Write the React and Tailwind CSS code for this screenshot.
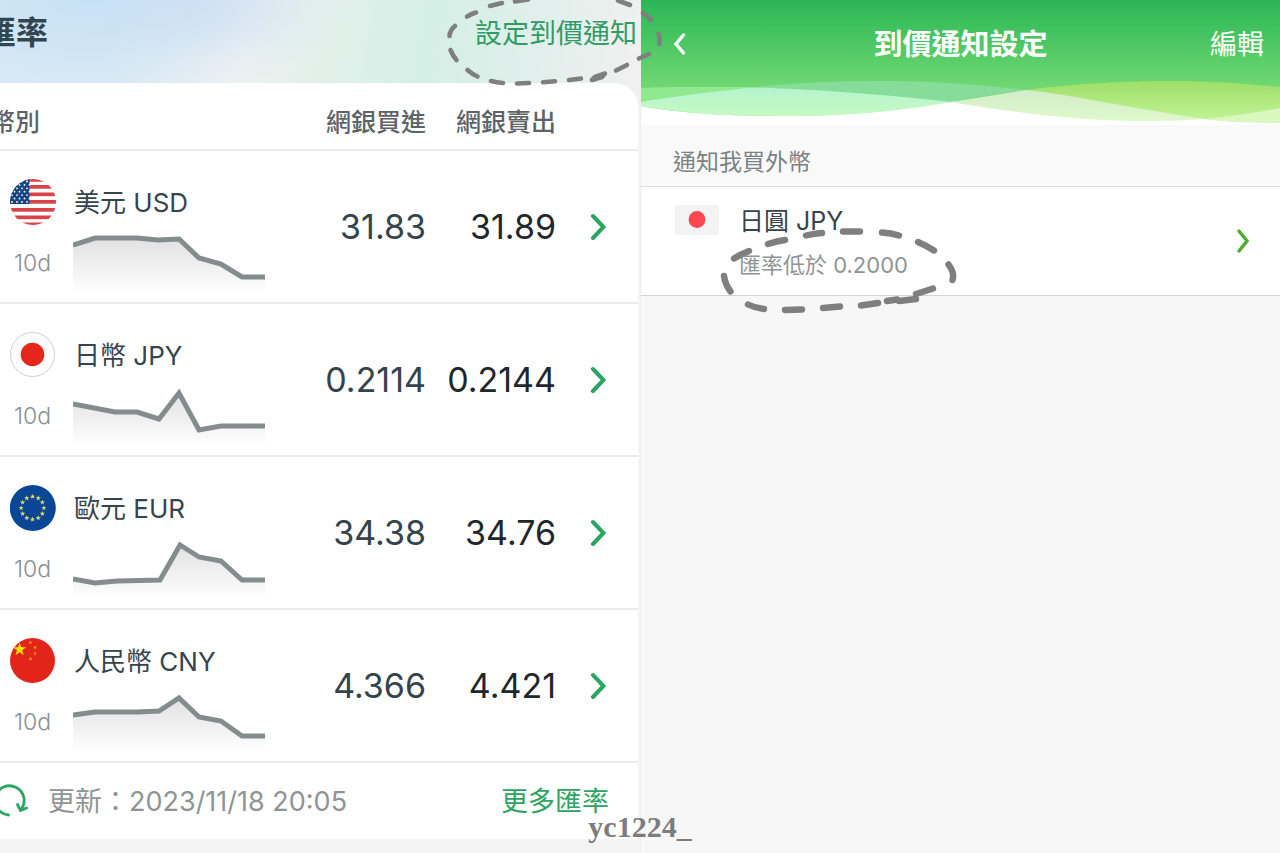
const currencies = [
  {
    code: 'USD',
    name: '美元',
    flag: FlagUS,
    buy: '31.83',
    sell: '31.89',
    points: [[0, 12], [22, 5], [64, 5], [85, 7], [106, 6], [126, 25], [148, 31], [169, 44], [192, 44]],
  },
  {
    code: 'JPY',
    name: '日幣',
    flag: FlagJP,
    buy: '0.2114',
    sell: '0.2144',
    points: [[0, 18], [42, 26], [64, 26], [86, 33], [106, 7], [126, 44], [148, 40], [192, 40]],
  },
  {
    code: 'EUR',
    name: '歐元',
    flag: FlagEU,
    buy: '34.38',
    sell: '34.76',
    points: [[0, 40], [22, 44], [44, 42], [87, 41], [107, 6], [126, 18], [148, 22], [169, 41], [192, 41]],
  },
  {
    code: 'CNY',
    name: '人民幣',
    flag: FlagCN,
    buy: '4.366',
    sell: '4.421',
    points: [[0, 23], [22, 20], [64, 20], [86, 19], [106, 6], [126, 25], [148, 29], [169, 44], [192, 44]],
  },
];

const STAR = 'M0 -1 L.225 -.309 L.951 -.309 L.363 .118 L.588 .809 L0 .382 L-.588 .809 L-.363 .118 L-.951 -.309 L-.225 -.309 Z';

function FlagUS() {
  const stars = [];
  for (let row = 0; row < 7; row++) {
    for (let col = 0; col < 4; col++) {
      stars.push([2 + col * 5 + (row % 2) * 2.5, 2.5 + row * 3.4]);
    }
  }

  return (
    <svg viewBox="0 0 46 46" className="h-[46px] w-[46px] shrink-0" aria-hidden="true">
      <clipPath id="us-clip">
        <circle cx="23" cy="23" r="23" />
      </clipPath>
      <g clipPath="url(#us-clip)">
        <rect width="46" height="46" fill="#fff" />
        {[-1, 6, 13.5, 21, 29, 36.5, 43.5].map((y) => (
          <rect key={y} y={y} width="46" height="3.7" fill="#d94247" />
        ))}
        <rect width="19.5" height="25" fill="#164584" />
        {stars.map(([x, y]) => (
          <circle key={`${x}-${y}`} cx={x} cy={y} r="0.9" fill="#fff" />
        ))}
      </g>
    </svg>
  );
}

function FlagJP() {
  return (
    <svg viewBox="0 0 46 46" className="h-[46px] w-[46px] shrink-0" aria-hidden="true">
      <circle cx="22.5" cy="22.5" r="22" fill="#fff" stroke="#cfcfcf" />
      <circle cx="22.5" cy="22.5" r="11.8" fill="#e5261c" />
    </svg>
  );
}

function FlagEU() {
  return (
    <svg viewBox="0 0 46 46" className="h-[46px] w-[46px] shrink-0" aria-hidden="true">
      <circle cx="22.8" cy="23" r="23" fill="#0b4595" />
      {Array.from({ length: 12 }, (_, i) => {
        const angle = (i * Math.PI) / 6;
        const x = 22.5 + 11.4 * Math.sin(angle);
        const y = 23 - 11.4 * Math.cos(angle);
        return <path key={i} d={STAR} transform={`translate(${x} ${y}) scale(2.8)`} fill="#dfe36a" />;
      })}
    </svg>
  );
}

function FlagCN() {
  return (
    <svg viewBox="0 0 46 46" className="h-[46px] w-[46px] shrink-0" aria-hidden="true">
      <circle cx="22.5" cy="22.5" r="22.5" fill="#e3241b" />
      <path d={STAR} transform="translate(9.6 11.5) scale(7)" fill="#ffe000" />
      {[[20.5, 4.5], [25, 9.5], [25, 15.5], [20.5, 21]].map(([x, y]) => (
        <path key={y} d={STAR} transform={`translate(${x} ${y}) scale(2.1)`} fill="#f7a813" />
      ))}
    </svg>
  );
}

function Sparkline({ id, points }) {
  const line = points.map(([x, y]) => `${x},${y}`).join(' ');

  return (
    <svg viewBox="0 0 192 57" className="h-[57px] w-[192px]" role="img" aria-label={`${id} 10d`}>
      <defs>
        <linearGradient id={`fill-${id}`} x1="0" y1="0" x2="0" y2="57" gradientUnits="userSpaceOnUse">
          <stop offset="0" stopColor="#dedede" />
          <stop offset="1" stopColor="#fdfdfd" />
        </linearGradient>
      </defs>
      <polygon points={`0,57 ${line} 192,57`} fill={`url(#fill-${id})`} />
      <polyline points={line} fill="none" stroke="#858c8e" strokeWidth="5" />
    </svg>
  );
}

function RefreshIcon() {
  return (
    <svg viewBox="0 0 38 34" className="h-[34px] w-[38px]" fill="none" stroke="#2ba562" strokeWidth="2.8" strokeLinecap="round" aria-hidden="true">
      <path d="M18.500 31A14.600 14.600 0 1 1 31 25.500" />
      <path d="M27.500 20.500L30.500 26.500L36.500 24" strokeLinejoin="round" />
    </svg>
  );
}

function Waves() {
  return (
    <svg viewBox="0 0 640 125" preserveAspectRatio="none" className="absolute inset-0 h-full w-full" aria-hidden="true">
      <defs>
        <linearGradient id="header" x1="0" y1="0" x2="0" y2="1">
          <stop offset="0" stopColor="#2bb656" />
          <stop offset="0.72" stopColor="#72d973" />
          <stop offset="1" stopColor="#8ce78a" />
        </linearGradient>
        <linearGradient id="mint" x1="0" y1="0" x2="0" y2="1">
          <stop offset="0" stopColor="#b5f3ce" />
          <stop offset="1" stopColor="#c6fac4" />
        </linearGradient>
        <linearGradient id="lime" x1="0" y1="0" x2="0" y2="1">
          <stop offset="0" stopColor="#9ddf67" />
          <stop offset="1" stopColor="#c5f59a" />
        </linearGradient>
        <linearGradient id="pale" x1="0" y1="0" x2="0" y2="1">
          <stop offset="0" stopColor="#d3ecca" />
          <stop offset="1" stopColor="#e0f8cb" />
        </linearGradient>
      </defs>
      <rect width="640" height="125" fill="url(#header)" />
      <path d="M0 106C30 112 80 116 140 116C210 116 260 110 310 101C370 108 440 117 500 118C530 118 550 118 565 118C590 121 610 122 640 122V125H0Z" fill="#fff" />
      <path d="M385 90C440 83 490 81 530 81C570 81 610 84 640 87V123C610 123 590 122 565 119C520 119 440 102 385 90Z" fill="url(#lime)" />
      <path d="M0 102C80 88 160 81 240 81C300 81 350 86 385 90C360 93 335 97 310 102C240 110 100 110 0 102Z" fill="#86dd9a" />
      <path d="M0 88C50 87 100 87 130 88C200 91 260 96 310 102C260 111 210 116 140 116C80 116 30 112 0 106Z" fill="url(#mint)" />
      <path d="M0 88C50 87 90 87 118 87C75 91 35 96 0 102Z" fill="#90e88f" />
      <path d="M310 102C335 98 360 94 385 90C440 96 500 110 565 119C550 120 530 121 500 121C440 121 370 112 310 102Z" fill="url(#pale)" />
      <path d="M565 119C595 116 620 112 640 108V123C610 123 590 122 565 119Z" fill="#d9f7be" />
    </svg>
  );
}

// hand-drawn dashed rings over the notification link and the target rate
function Annotations() {
  return (
    <svg width="970" height="320" className="pointer-events-none absolute top-0 left-0" fill="none" stroke="#7f7f7f" strokeLinecap="round" strokeLinejoin="round" aria-hidden="true">
      <g strokeWidth="4.6">
        <path d="M490 6L502 3M515 1.5L528 -.5M618 .5L630 5M643 13Q648 16 651 20M658.5 34Q660 38 659.5 44M649 54L639 58.500" />
        <path d="M467 16.500Q472 13.500 476 12.500M455 26Q450 30 449.500 36M450.500 50Q453 56 456.500 60M467.500 70Q472 74 477.500 76.500M491 81Q497 82.500 503 83" />
        <path d="M517 83.500L529 83M543 82.300L555 81.200M569 80L581 78.500M616 70.500L627 65" />
        <path d="M592 80L595 77L605 73.500L602 77Z" fill="#7f7f7f" />
      </g>
      <g strokeWidth="6.4">
        <path d="M734 258.500Q741 254 749 251M768 244Q777 241 785 240M806 235.500Q814 233.500 822 233M843 231.500L860 231.500M882 232.500Q891 233 899 235.500M918 242Q927 246 934 250.500" />
        <path d="M948.500 264.500Q955 273 952.500 280M933 288.500L916 294M916 299L899 301M897 299.500L887 301M878 303L861 305.500" />
        <path d="M840 306.500L823 308M802 309.500L785 310M764 309Q755 308 748 304.500M730.500 291.500Q725 284 724 276" />
      </g>
    </svg>
  );
}

function RatesPanel() {
  return (
    <section className="flex flex-col overflow-hidden bg-[#f4f4f4] pr-0.5">
      <div className="-mr-0.5 bg-[radial-gradient(ellipse_260px_110px_at_90px_0px,#c7e1f4_0%,#c7e1f400_100%),radial-gradient(ellipse_120px_60px_at_190px_0px,#d8dff4_0%,#d8dff400_100%),linear-gradient(100deg,#dcebf4_0%,#dcebf4_18%,#f0f2f2_37%,#e2f0ea_50%,#d4efe6_66%,#e0efeb_82%,#f0f0f0_98%)]">
        <header className="flex h-[83px] items-start justify-between pr-[3px]">
          <h1 className="-ml-4 pt-2 text-[32px] leading-[50px] font-bold text-[#324650]">匯率</h1>
          <a href="#notify" className="pt-3.5 text-[27px] leading-10 text-[#2f9c66]">
            設定到價通知
          </a>
        </header>
        <div className="mr-0.5 h-6 rounded-tr-3xl bg-white" />
      </div>

      <div className="bg-white">
        <table className="w-full table-fixed">
          <thead>
            <tr className="border-b-2 border-[#ebebeb] text-[25px] leading-[30px] text-[#5d6468]">
              <th className="pb-3 text-left font-medium">
                <span className="-ml-2.5">幣別</span>
              </th>
              <th className="w-[130px] pb-3 text-right font-medium">網銀買進</th>
              <th className="w-[130px] pb-3 text-right font-medium">網銀賣出</th>
              <th className="w-[82px]" />
            </tr>
          </thead>
          <tbody>
            {currencies.map(({ code, name, flag: Flag, buy, sell, points }) => (
              <tr key={code} className="border-b-2 border-[#ebebeb]">
                <td className="pt-7 pb-3 pl-2.5">
                  <div className="flex items-center gap-[18px] text-[26px] whitespace-nowrap text-[#36444d]">
                    <Flag />
                    {name} {code}
                  </div>
                  <div className="mt-2 flex items-center">
                    <span className="w-[63px] pt-1 pl-1 text-[23px] font-light text-[#8a8f91]">10d</span>
                    <Sparkline id={code} points={points} />
                  </div>
                </td>
                <td className="text-right text-[34px] text-[#34434c]">{buy}</td>
                <td className="text-right text-[34px] text-[#1f272c]">{sell}</td>
                <td className="pr-8 text-right">
                  <a href={`#${code}`} aria-label={`${name} ${code}`} className="inline-block align-middle">
                    <svg viewBox="0 0 16 28" className="h-7 w-4" fill="none" stroke="#2ba562" strokeWidth="4">
                      <path d="M3 3L13.500 14L3 25" strokeLinecap="round" strokeLinejoin="miter" />
                    </svg>
                  </a>
                </td>
              </tr>
            ))}
          </tbody>
        </table>

        <footer className="flex h-[76px] items-center pr-[29px]">
          <button type="button" aria-label="更新" className="-ml-2.5">
            <RefreshIcon />
          </button>
          <p className="ml-5 pt-0.5 text-[27px] text-[#909495]">更新：2023/11/18 20:05</p>
          <a href="#more" className="ml-auto pt-0.5 text-[27px] text-[#2ba562]">
            更多匯率
          </a>
        </footer>
      </div>
    </section>
  );
}

function NotifyPanel() {
  return (
    <section className="border-l border-[#eeeeee] bg-[#f7f7f7]">
      <header className="relative h-[125px]">
        <Waves />
        <div className="relative grid h-[90px] grid-cols-[1fr_auto_1fr] items-center px-4 text-white">
          <button type="button" aria-label="返回" className="justify-self-start pl-2">
            <svg viewBox="0 0 28 28" className="h-7 w-7" fill="none" stroke="#fff" strokeWidth="3.4">
              <path d="M18.500 4L11 13L18.500 22" strokeLinecap="round" />
            </svg>
          </button>
          <h2 className="text-[29px] font-bold">到價通知設定</h2>
          <button type="button" className="justify-self-end text-[27px]">
            編輯
          </button>
        </div>
      </header>

      <h3 className="flex h-[62px] items-center border-b border-[#dedede] bg-[#f9f9f9] pt-3.5 pl-8 text-[23px] text-[#7b8285]">
        通知我買外幣
      </h3>
      <a href="#jpy" className="flex h-[109px] items-start border-b border-[#d4d4d4] bg-white pr-[30px] pl-[34px]">
        <svg viewBox="0 0 44 30" className="mt-[18px] h-[30px] w-11" aria-hidden="true">
          <rect width="44" height="30" rx="2" fill="#f3f3f3" />
          <circle cx="22" cy="14.500" r="8.400" fill="#fb4750" />
        </svg>
        <span className="ml-5 pt-3.5">
          <span className="block text-[25px] leading-10 text-[#36444d]">日圓 JPY</span>
          <span className="block pt-1 text-[22px] leading-10 text-[#8f9496]">匯率低於 0.2000</span>
        </span>
        <svg viewBox="0 0 14 26" className="ml-auto h-[26px] w-3.5 self-center" fill="none" stroke="#4bae2c" strokeWidth="3.400" aria-hidden="true">
          <path d="M3 3L11 13L3 23" strokeLinecap="round" />
        </svg>
      </a>
    </section>
  );
}

export default function App() {
  return (
    <main
      lang="zh-Hant"
      className="relative grid min-h-screen grid-cols-2 font-[Inter,'Noto_Sans_CJK_TC',sans-serif]"
    >
      <RatesPanel />
      <NotifyPanel />
      <Annotations />
      <p className="absolute bottom-2 left-1/2 -translate-x-1/2 font-['Liberation_Serif',serif] text-[30px] leading-9 font-bold text-[#7d7d7d]">
        yc1224_
      </p>
    </main>
  );
}
